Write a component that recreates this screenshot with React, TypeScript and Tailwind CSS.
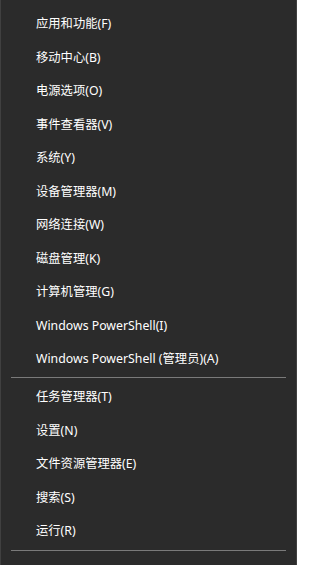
import React from "react";

const group1 = [
  "应用和功能(F)",
  "移动中心(B)",
  "电源选项(O)",
  "事件查看器(V)",
  "系统(Y)",
  "设备管理器(M)",
  "网络连接(W)",
  "磁盘管理(K)",
  "计算机管理(G)",
  "Windows PowerShell(I)",
  "Windows PowerShell (管理员)(A)",
];

const group2 = ["任务管理器(T)", "设置(N)", "文件资源管理器(E)", "搜索(S)", "运行(R)"];

function Item({ label, arrow }: { label: string; arrow?: boolean }) {
  return (
    <div className="flex h-[33.5px] shrink-0 items-center justify-between pl-[35px] pr-[14px]">
      <span className="whitespace-nowrap">{label}</span>
      {arrow && (
        <svg width="8" height="10" viewBox="0 0 8 10" className="text-white">
          <path d="M2 1 L6 5 L2 9" fill="none" stroke="currentColor" strokeWidth="1.2" />
        </svg>
      )}
    </div>
  );
}

export default function App() {
  return (
    <div
      className="flex h-[565px] w-[297px] flex-col overflow-hidden border-x border-[#404040] bg-[#2b2b2b] pt-[7.5px] text-[12.3px] text-white"
      style={{ fontFamily: '"Noto Sans", "Noto Sans CJK SC", sans-serif' }}
    >
      {group1.map((l) => (
        <Item key={l} label={l} />
      ))}
      <div className="mx-[10px] mt-[1px] mb-[2.5px] h-px shrink-0 bg-[#7a7a7a]" />
      {group2.map((l) => (
        <Item key={l} label={l} />
      ))}
      <div className="mx-[10px] mt-[2px] mb-[4.5px] h-px shrink-0 bg-[#7a7a7a]" />
      <Item label="关机或注销(U)" arrow />
    </div>
  );
}
